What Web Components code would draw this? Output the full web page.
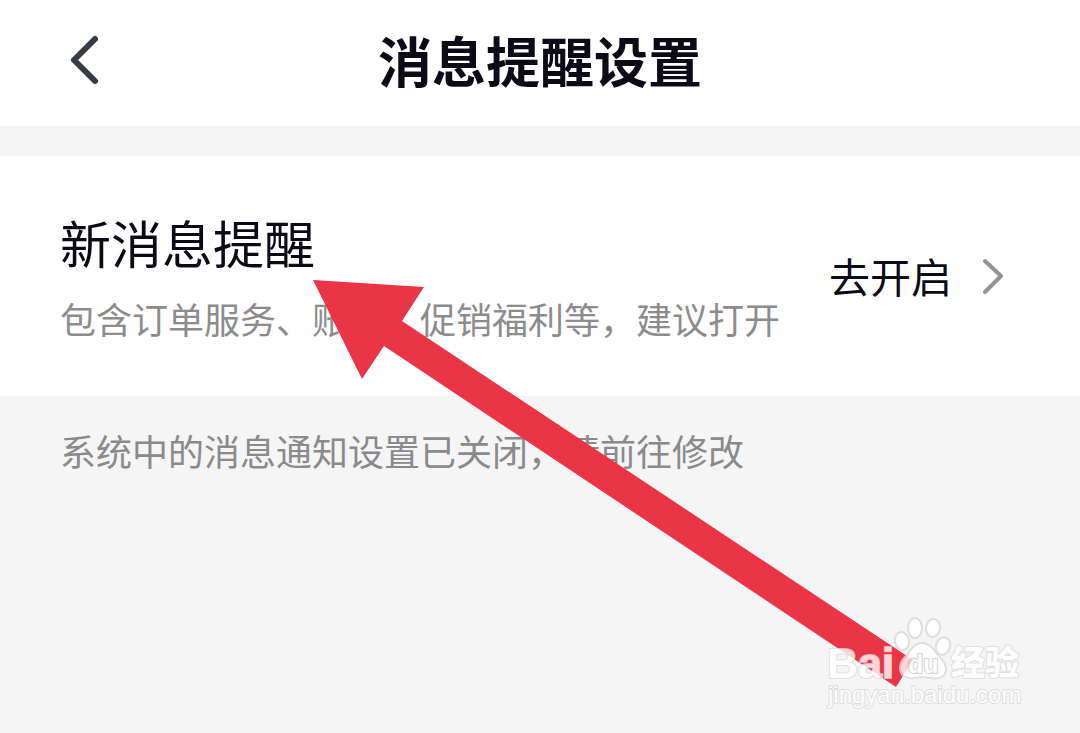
<!DOCTYPE html>
<html lang="zh-CN">
<head>
<meta charset="utf-8">
<meta name="viewport" content="width=device-width, initial-scale=1">
<title>消息提醒设置</title>
<style>
  html, body { margin: 0; }
  body {
    background: #f5f5f5;
    color: #0b0b17;
    font-family: "Noto Sans CJK SC", "Liberation Sans", sans-serif;
  }
</style>
</head>
<body>
<settings-page>
  <nav-header slot="header">消息提醒设置</nav-header>
  <setting-row>
    <span slot="title">新消息提醒</span>
    <span slot="hint">包含订单服务、账户、促销福利等，建议打开</span>
    <span slot="action">去开启</span>
  </setting-row>
  <setting-note>系统中的消息通知设置已关闭，请前往修改</setting-note>
  <pointer-arrow slot="overlay"></pointer-arrow>
  <site-watermark slot="overlay"></site-watermark>
</settings-page>

<script>
class BaseElement extends HTMLElement {
  constructor() {
    super();
    this.attachShadow({ mode: "open" }).innerHTML = this.constructor.markup;
  }
}

class SettingsPage extends BaseElement {
  static markup = `
    <style>
      :host { display: flex; flex-direction: column; position: relative; min-height: 100vh; overflow: hidden; }
      main { padding-top: 30px; }
    </style>
    <slot name="header"></slot>
    <main><slot></slot></main>
    <slot name="overlay"></slot>`;
}

class NavHeader extends BaseElement {
  static markup = `
    <style>
      :host { display: block; background: #fff; }
      header { display: grid; grid-template-columns: 60px 1fr 60px; align-items: center; padding: 20px 54px 26px; }
      button { display: flex; align-items: center; justify-content: center; width: 60px; height: 60px; padding: 0; border: 0; background: none; }
      h1 { margin: 0; text-align: center; font-size: 54px; line-height: 80px; font-weight: 700; }
    </style>
    <header>
      <button type="button" aria-label="返回">
        <svg width="60" height="60" viewBox="0 0 60 60" fill="none" stroke="#383b46" stroke-width="6" stroke-linecap="round" stroke-linejoin="round" aria-hidden="true"><path d="M41 9L20 30L41 51"/></svg>
      </button>
      <h1><slot></slot></h1>
    </header>`;
}

class SettingRow extends BaseElement {
  static markup = `
    <style>
      :host { display: block; background: #fff; }
      section { display: flex; align-items: center; justify-content: space-between; min-height: 240px; padding: 0 60px; box-sizing: border-box; }
      div { padding-top: 4px; }
      h2, p { margin: 0; font-weight: 400; white-space: nowrap; }
      h2 { font-size: 51px; line-height: 80px; }
      p { font-size: 36px; line-height: 72px; color: #8c8c8c; }
      button { display: flex; align-items: center; gap: 12px; padding: 0 0 2px; border: 0; background: none; color: inherit; font: inherit; font-size: 41px; line-height: 60px; white-space: nowrap; }
      svg { display: block; }
    </style>
    <section>
      <div><h2><slot name="title"></slot></h2><p><slot name="hint"></slot></p></div>
      <button type="button"><slot name="action"></slot>
        <svg width="56" height="48" viewBox="0 0 56 48" fill="none" stroke="#929297" stroke-width="4" stroke-linecap="round" stroke-linejoin="round" aria-hidden="true"><path d="M21 10L37 25L21 41"/></svg>
      </button>
    </section>`;
}

class SettingNote extends BaseElement {
  static markup = `
    <style>
      :host { display: block; padding: 18px 60px; }
      p { margin: 0; font-size: 36px; line-height: 72px; color: #8a8a8c; }
    </style>
    <p><slot></slot></p>`;
}

class PointerArrow extends BaseElement {
  static markup = `
    <style>
      :host { position: absolute; left: 312px; top: 279px; pointer-events: none; }
      svg { display: block; }
    </style>
    <svg width="602" height="409" viewBox="312 279 602 409" aria-hidden="true">
      <polygon points="313,280 424,287 402,321 913,660 896,687 384,346 362,379" fill="#ea3547"/>
    </svg>`;
}

class SiteWatermark extends BaseElement {
  static markup = `
    <style>
      :host { position: absolute; right: 50px; bottom: 13px; pointer-events: none; }
      svg { display: block; }
      text { font-family: "Liberation Sans", "Noto Sans CJK SC", sans-serif; paint-order: stroke; stroke-linejoin: round; }
      .mark { fill: #fff; stroke: #dadada; stroke-width: 2; }
      .bold { font-weight: 700; }
      .cjk { font-family: "Noto Sans CJK SC", sans-serif; font-weight: 900; }
    </style>
    <svg width="210" height="110" viewBox="820 610 210 110" role="img" aria-label="Baidu 经验">
      <g opacity="0.8">
        <text class="mark bold" x="827" y="678" font-size="43">Bai</text>
        <g class="mark">
          <ellipse cx="902" cy="641" rx="7" ry="9" transform="rotate(-14 902 641)"/>
          <ellipse cx="915" cy="628" rx="7" ry="10"/>
          <ellipse cx="933" cy="628" rx="7" ry="9" transform="rotate(8 933 628)"/>
          <ellipse cx="943" cy="646" rx="7" ry="9" transform="rotate(18 943 646)"/>
          <path d="M922 643C915 643 911 649 907 655C902 659 900 663 900 668C900 676 906 679 914 678C920 677 925 677 931 678C940 680 946 676 946 669C946 662 941 659 937 654C933 648 929 643 922 643Z"/>
        </g>
        <text class="bold" x="908" y="673" font-size="25" fill="#fff" stroke="#cacaca" stroke-width="2">du</text>
        <text class="mark cjk" x="951" y="675" font-size="34">经验</text>
        <text class="mark" x="828" y="703" font-size="24">jingyan.baidu.com</text>
      </g>
    </svg>`;
}

customElements.define("settings-page", SettingsPage);
customElements.define("nav-header", NavHeader);
customElements.define("setting-row", SettingRow);
customElements.define("setting-note", SettingNote);
customElements.define("pointer-arrow", PointerArrow);
customElements.define("site-watermark", SiteWatermark);
</script>
</body>
</html>
